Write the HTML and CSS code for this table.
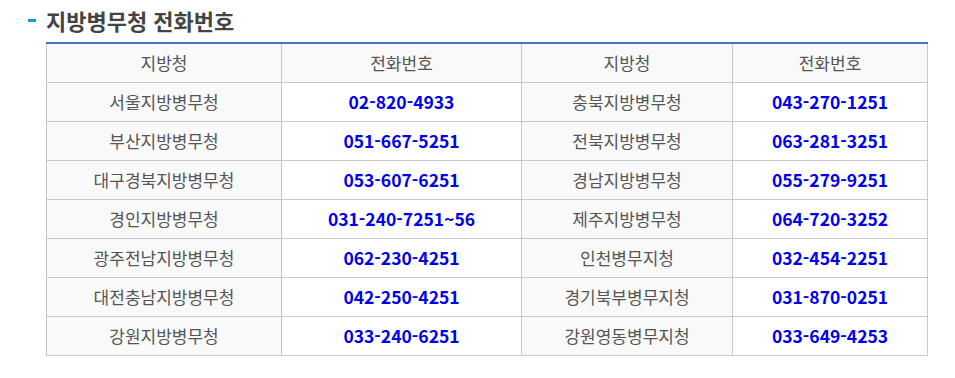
FILE: index.html
```html
<!DOCTYPE html>
<html lang="ko">
<head>
<meta charset="utf-8">
<link rel="stylesheet" href="styles.css">
</head>
<body>
<div class="wrap">
  <h2 class="title"><span class="dash"></span>지방병무청 전화번호</h2>
  <table class="tel">
    <colgroup>
      <col class="c1"><col class="c2"><col class="c3"><col class="c4">
    </colgroup>
    <thead>
      <tr><th>지방청</th><th>전화번호</th><th>지방청</th><th>전화번호</th></tr>
    </thead>
    <tbody>
      <tr><td class="lbl">서울지방병무청</td><td class="num">02-820-4933</td><td class="lbl">충북지방병무청</td><td class="num">043-270-1251</td></tr>
      <tr><td class="lbl">부산지방병무청</td><td class="num">051-667-5251</td><td class="lbl">전북지방병무청</td><td class="num">063-281-3251</td></tr>
      <tr><td class="lbl">대구경북지방병무청</td><td class="num">053-607-6251</td><td class="lbl">경남지방병무청</td><td class="num">055-279-9251</td></tr>
      <tr><td class="lbl">경인지방병무청</td><td class="num">031-240-7251~56</td><td class="lbl">제주지방병무청</td><td class="num">064-720-3252</td></tr>
      <tr><td class="lbl">광주전남지방병무청</td><td class="num">062-230-4251</td><td class="lbl">인천병무지청</td><td class="num">032-454-2251</td></tr>
      <tr><td class="lbl">대전충남지방병무청</td><td class="num">042-250-4251</td><td class="lbl">경기북부병무지청</td><td class="num">031-870-0251</td></tr>
      <tr><td class="lbl">강원지방병무청</td><td class="num">033-240-6251</td><td class="lbl">강원영동병무지청</td><td class="num">033-649-4253</td></tr>
    </tbody>
  </table>
</div>
</body>
</html>
```

FILE: styles.css
```css
html, body {
  margin: 0;
  padding: 0;
  background: #fff;
}
body {
  font-family: "Noto Sans CJK KR", "Noto Sans", sans-serif;
}
.wrap {
  padding: 6px 0 0 28px;
}
.title {
  display: flex;
  align-items: center;
  margin: 0 0 8px 0;
  height: 28px;
  font-size: 22px;
  font-weight: 700;
  color: #444;
  letter-spacing: 0;
}
.dash {
  display: inline-block;
  width: 8px;
  height: 3px;
  background: #0a9be8;
  margin-right: 10px;
  margin-top: 1px;
}
.tel {
  margin-left: 18px;
  width: 881px;
  border-collapse: collapse;
  border-top: 2px solid #4a72c0;
  table-layout: fixed;
}
.c1 { width: 235px; }
.c2 { width: 240px; }
.c3 { width: 211px; }
.c4 { width: 195px; }
.tel th, .tel td {
  border: 1px solid #c8c8c8;
  height: 38px;
  padding: 0;
  text-align: center;
  vertical-align: middle;
  font-size: 17px;
  line-height: 20px;
}
.tel thead tr:first-child th {
  border-top: none;
}
.tel th {
  background: #f9f9f9;
  font-weight: 400;
  color: #555;
}
.tel td.lbl {
  background: #f9f9f9;
  color: #555;
}
.tel td.num {
  background: #fff;
  color: #0000ee;
  font-weight: 700;
  font-size: 17.5px;
}
```
